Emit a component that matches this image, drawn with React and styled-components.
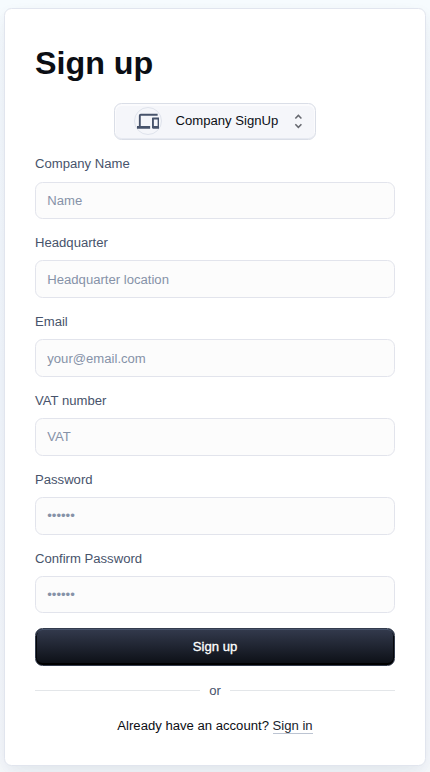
import React from "react";
import styled, { createGlobalStyle } from "styled-components";

const GlobalStyle = createGlobalStyle`
  *, *::before, *::after { box-sizing: border-box; }
  body {
    margin: 0;
    font-family: "Liberation Sans", Arial, sans-serif;
    font-size: 13.125px;
    color: #0b0e14;
  }
`;

const Page = styled.main`
  height: 772px;
  overflow: hidden;
  padding: 8px 4px 0;
  background: linear-gradient(#f6fbfe, #f3f8fd 50%, #f6f9fc);
`;

const Card = styled.form`
  display: flex;
  flex-direction: column;
  gap: 15px;
  height: 757.5px;
  padding: 30px;
  border: 1px solid #e1e5ee;
  border-radius: 7.5px;
  background: #fff;
  box-shadow: 0 5px 14px rgba(19, 36, 70, 0.05), 0 14px 33px -5px rgba(19, 36, 70, 0.05);
`;

const Title = styled.h1`
  margin: 0;
  font-size: 32.25px;
  font-weight: 700;
  line-height: 48.75px;
`;

const Select = styled.button`
  align-self: center;
  display: flex;
  align-items: center;
  flex: none;
  width: 202px;
  height: 37.5px;
  padding: 0 7.3px 0 19px;
  border: 1px solid #dadee7;
  border-radius: 7.5px;
  background: #f5f6fa;
  box-shadow: inset 0 1px 0 1px rgba(255, 255, 255, 0.6), inset 0 -1px 0 rgba(220, 225, 235, 0.6);
  color: #0b0e14;
  font: inherit;
`;

const IconCircle = styled.span`
  display: flex;
  align-items: center;
  justify-content: center;
  width: 28px;
  height: 28px;
  margin: 0 13.5px 1px 0;
  border: 1px solid #dfe3ec;
  border-radius: 50%;
  color: #47536b;
  svg { flex: none; }
`;

const SelectText = styled.span`
  flex: 1;
  text-align: left;
  line-height: 18px;
  padding-bottom: 1.5px;
`;

const Field = styled.div`
  display: flex;
  flex-direction: column;
  gap: 7.5px;
`;

const Label = styled.label`
  line-height: 18.86px;
  color: #47536b;
`;

const Input = styled.input`
  width: 100%;
  height: 37.5px;
  padding: 0 11.25px;
  border: 1px solid #e2e4ec;
  border-radius: 7.5px;
  background: #fcfcfc;
  font: inherit;
  outline: none;
  &::placeholder { color: #8692a8; opacity: 1; }
`;

const Submit = styled.button`
  height: 37.5px;
  flex: none;
  padding: 0 0 1.5px;
  border: 1px solid #333b4d;
  border-radius: 7.5px;
  background: linear-gradient(#333a4d, #0b0e14);
  box-shadow: inset 0 1px 0 #47536b, inset 0 -2px 0 #000, inset 1px 0 0 #05070a, inset -1px 0 0 #05070a;
  color: #fff;
  font: inherit;
  -webkit-text-stroke: 0.3px #fff;
`;

const Divider = styled.div`
  display: flex;
  align-items: center;
  gap: 9.5px;
  line-height: 19.7px;
  color: #47536b;
  &::before, &::after {
    content: "";
    flex: 1;
    height: 1px;
    background: #e3e6e9;
  }
`;

const Footer = styled.p`
  margin: 0;
  text-align: center;
  line-height: 19.7px;
`;

const Link = styled.a`
  display: inline-block;
  line-height: 14px;
  border-bottom: 1px solid #bcc4d2;
  color: #20242e;
`;

const fields = [
  { id: "company", label: "Company Name", placeholder: "Name" },
  { id: "hq", label: "Headquarter", placeholder: "Headquarter location" },
  { id: "email", label: "Email", placeholder: "your@email.com" },
  { id: "vat", label: "VAT number", placeholder: "VAT" },
  { id: "password", label: "Password", placeholder: "••••••", type: "password" },
  { id: "confirm", label: "Confirm Password", placeholder: "••••••", type: "password" },
];

const DevicesIcon = () => (
  <svg width="22.5" height="22.5" viewBox="0 0 24 24" fill="currentColor">
    <path d="M4 6h18V4H4c-1.1 0-2 .9-2 2v11H0v3h14v-3H4V6zm19 2h-6c-.55 0-1 .45-1 1v10c0 .55.45 1 1 1h6c.55 0 1-.45 1-1V9c0-.55-.45-1-1-1zm-1 9h-4v-7h4v7z" />
  </svg>
);

const UnfoldIcon = () => (
  <svg width="18.75" height="18.75" viewBox="0 0 24 24" fill="#66686f">
    <path d="M12 5.83 15.17 9l1.41-1.41L12 3 7.41 7.59 8.83 9 12 5.83zm0 12.34L8.83 15l-1.41 1.41L12 21l4.59-4.59L15.17 15 12 18.17z" />
  </svg>
);

export default function App() {
  return (
    <>
      <GlobalStyle />
      <Page>
        <Card>
          <Title>Sign up</Title>
          <Select type="button">
            <IconCircle><DevicesIcon /></IconCircle>
            <SelectText>Company SignUp</SelectText>
            <UnfoldIcon />
          </Select>
          {fields.map((f) => (
            <Field key={f.id}>
              <Label htmlFor={f.id}>{f.label}</Label>
              <Input id={f.id} type={f.type || "text"} placeholder={f.placeholder} />
            </Field>
          ))}
          <Submit type="button">Sign up</Submit>
          <Divider>or</Divider>
          <Footer>
            Already have an account? <Link>Sign in</Link>
          </Footer>
        </Card>
      </Page>
    </>
  );
}
